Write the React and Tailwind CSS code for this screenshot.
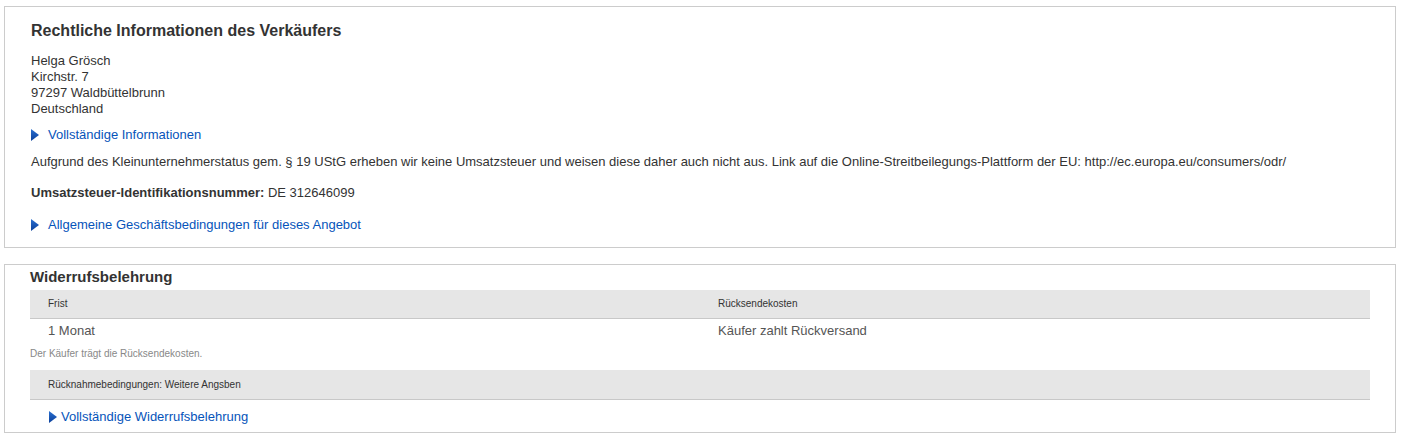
const Arrow = () => (
    <svg width="8" height="12" viewBox="0 0 8 12">
        <defs>
            <linearGradient id="arrowGrad" x1="0" y1="0" x2="0" y2="1">
                <stop offset="0%" stopColor="#2a6fd0" />
                <stop offset="100%" stopColor="#0a3f9a" />
            </linearGradient>
        </defs>
        <polygon points="0,0 8,6 0,12" fill="url(#arrowGrad)" />
    </svg>
);

const MoreLink = ({ children, className = '' }) => (
    <a href="#" className={`flex items-center text-[#0654ba] leading-4 ${className}`}>
        <Arrow />
        <span>{children}</span>
    </a>
);

export default function App() {
    return (
        <div className="min-h-screen bg-white px-[4px] pt-[6px] pr-[6px] text-[#333] font-['Liberation_Sans',Arial,sans-serif]">
            {/* Legal info */}
            <section className="border border-[#ccc] pl-[26px] pt-[14px] pb-[14px] text-[13px]">
                <h2 className="text-[16px] font-bold leading-5">Rechtliche Informationen des Verkäufers</h2>
                <div className="mt-3 leading-4">
                    <div>Helga Grösch</div>
                    <div>Kirchstr. 7</div>
                    <div>97297 Waldbüttelbrunn</div>
                    <div>Deutschland</div>
                </div>
                <MoreLink className="mt-[10px] gap-[9px]">Vollständige Informationen</MoreLink>
                <p className="mt-[11px] leading-4">
                    Aufgrund des Kleinunternehmerstatus gem. § 19 UStG erheben wir keine Umsatzsteuer und weisen diese daher auch nicht aus. Link auf die Online-Streitbeilegungs-Plattform der EU: http://ec.europa.eu/consumers/odr/
                </p>
                <p className="mt-[15px] leading-4">
                    <span className="font-bold">Umsatzsteuer-Identifikationsnummer:</span> DE 312646099
                </p>
                <MoreLink className="mt-4 gap-[9px]">Allgemeine Geschäftsbedingungen für dieses Angebot</MoreLink>
            </section>

            {/* Return policy */}
            <section className="mt-[16px] border border-[#ccc] pl-[25px] pr-[25px] pt-[2px] pb-[7px]">
                <h2 className="text-[15px] font-bold leading-5">Widerrufsbelehrung</h2>
                <div className="mt-[3px] grid grid-cols-2 bg-[#e6e6e6] border-b border-[#c8c8c8] h-[29px] items-center text-[10px] leading-3">
                    <div className="pl-[18px]">Frist</div>
                    <div className="pl-[18px]">Rücksendekosten</div>
                </div>
                <div className="grid grid-cols-2 text-[13px] leading-4 text-[#555] mt-[4px]">
                    <div className="pl-[18px]">1 Monat</div>
                    <div className="pl-[18px]">Käufer zahlt Rückversand</div>
                </div>
                <div className="mt-[9px] text-[10px] leading-3 text-[#888]">Der Käufer trägt die Rücksendekosten.</div>
                <div className="mt-[10px] flex items-center bg-[#e6e6e6] border-b border-[#c8c8c8] h-[30px] pl-[18px] text-[10px] leading-3">
                    Rücknahmebedingungen: Weitere Angsben
                </div>
                <MoreLink className="mt-[9px] ml-[19px] text-[13px] gap-[4px]">Vollständige Widerrufsbelehrung</MoreLink>
            </section>
        </div>
    );
}
